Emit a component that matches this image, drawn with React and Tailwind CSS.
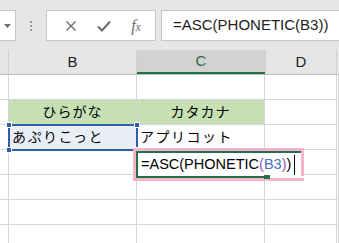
import React from 'react';

const JP = { fontFamily: '"Liberation Sans", "Noto Sans CJK JP", sans-serif' };

const cols = ['w-[9px]', 'w-[128px]', 'w-[128px]', 'w-[72px]', 'flex-1'];

const Row = ({ children, green }) => (
  <div className="flex h-[25px]">
    {cols.map((w, i) => (
      <div
        key={i}
        className={`${w} shrink-0 h-[25px] border-r border-b border-[#d6d6d6] flex items-center ${green && (i === 1 || i === 2) ? 'bg-[#c6e0b4]' : ''}`}
      >
        {children ? children[i] : null}
      </div>
    ))}
  </div>
);

const App = () => {
  return (
    <div className="relative w-[339px] h-[243px] overflow-hidden bg-white text-black" style={JP}>
      {/* formula bar */}
      <div className="h-[50px] bg-[#e6e6e6] flex items-start pt-[10px]">
        <div className="w-[16px] h-[31px] bg-white border border-l-0 border-[#c6c6c6] flex items-center justify-center">
          <svg width="7" height="4" viewBox="0 0 7 4"><path d="M0 0h7L3.5 4z" fill="#6b6b6b" /></svg>
        </div>
        <div className="w-[30px] h-[31px] flex flex-col items-center justify-center gap-[2px]">
          <div className="w-[2px] h-[2px] bg-[#9a9a9a]" />
          <div className="w-[2px] h-[2px] bg-[#9a9a9a]" />
          <div className="w-[2px] h-[2px] bg-[#9a9a9a]" />
        </div>
        <div className="w-[110px] h-[31px] bg-white border border-[#c6c6c6] flex items-center justify-around pl-[8px] pr-[4px]">
          <svg width="12" height="12" viewBox="0 0 12 12"><path d="M1.5 1.5l9 9M10.5 1.5l-9 9" stroke="#6b6b6b" strokeWidth="1.4" /></svg>
          <svg width="14" height="12" viewBox="0 0 14 12"><path d="M1 6.5l4 4 8-9" fill="none" stroke="#6b6b6b" strokeWidth="2" /></svg>
          <span className="text-[16px] italic text-[#6b6b6b] leading-none" style={{ fontFamily: '"Liberation Serif", serif' }}>f<span className="text-[12px]">x</span></span>
        </div>
        <div className="ml-[5px] flex-1 h-[31px] bg-white border border-r-0 border-[#c6c6c6] flex items-center pl-[11px] text-[15px] text-[#222]">
          =ASC(PHONETIC(B3))
        </div>
      </div>

      {/* column headers */}
      <div className="flex h-[25px] bg-[#e6e6e6] border-b border-[#bdbdbd] text-[15px] text-[#222]">
        <div className="w-[9px] shrink-0 border-r border-[#cfcfcf]" />
        <div className="w-[128px] shrink-0 border-r border-[#cfcfcf] flex items-center justify-center">B</div>
        <div className="w-[128px] shrink-0 bg-[#d2d2d2] border-b-2 border-[#217346] flex items-center justify-center text-[#2b6b4a]">C</div>
        <div className="w-[72px] shrink-0 border-l border-r border-[#cfcfcf] flex items-center justify-center">D</div>
        <div className="flex-1" />
      </div>

      {/* grid */}
      <div className="relative text-[14px]">
        <Row />
        <Row green>
          {[null, <span className="w-full text-center tracking-[1px]">ひらがな</span>, <span className="w-full text-center tracking-[1px]">カタカナ</span>, null, null]}
        </Row>
        <Row>
          {[null, <span className="pl-[3px] tracking-[1.5px]">あぷりこっと</span>, <span className="pl-[3px] tracking-[1.5px]">アプリコット</span>, null, null]}
        </Row>
        <Row />
        <Row />
        <Row />
        <Row />

        {/* B3 selection */}
        <div className="absolute left-[8px] top-[49px] w-[130px] h-[27px] border-2 border-[#2f5ea8] bg-[#2f5ea8]/10 pointer-events-none">
          <div className="absolute -left-[4px] -top-[4px] w-[6px] h-[6px] bg-[#2f5ea8] border border-white" />
          <div className="absolute -right-[4px] -top-[4px] w-[6px] h-[6px] bg-[#2f5ea8] border border-white" />
          <div className="absolute -left-[4px] -bottom-[4px] w-[6px] h-[6px] bg-[#2f5ea8] border border-white" />
          <div className="absolute -right-[4px] -bottom-[4px] w-[6px] h-[6px] bg-[#2f5ea8] border border-white" />
        </div>

        {/* C4 edit */}
        <div className="absolute left-[133px] top-[73px] w-[171px] h-[33px] border-[3px] border-[#f4b4cb] bg-white">
          <div className="relative h-full border-l-2 border-t-2 border-b-2 border-[#217346] flex items-center pl-[3px] text-[14.5px]">
            <span>=ASC(PHONETIC</span>
            <span className="text-[#9b59b6]">(</span>
            <span className="text-[#4472c4]">B3</span>
            <span className="text-[#9b59b6]">)</span>
            <span>)</span>
            <span className="ml-[3px] w-[1px] h-[20px] bg-black" />
            <div className="absolute left-[126px] -bottom-[3px] w-[6px] h-[4px] bg-[#217346]" />
            <div className="absolute left-[132px] -bottom-[2px] w-[34px] h-[2px] bg-white" />
          </div>
        </div>
      </div>
    </div>
  );
};

export default App;
